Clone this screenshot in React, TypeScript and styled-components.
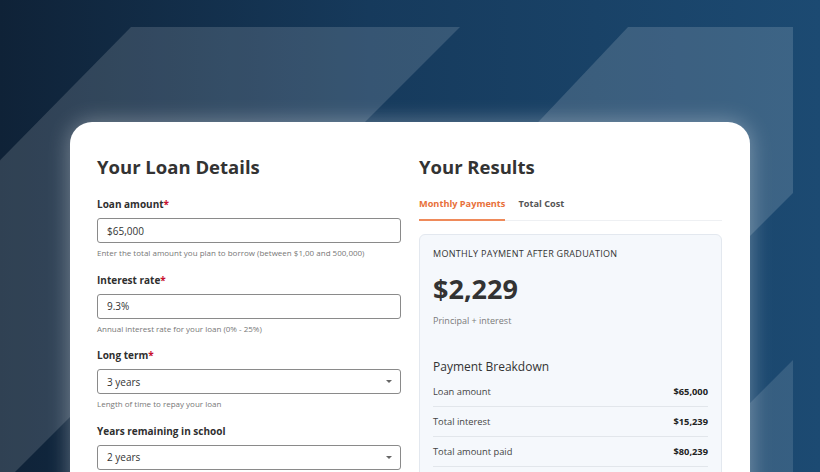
import React from 'react';
import styled, { createGlobalStyle } from 'styled-components';

const GlobalStyle = createGlobalStyle`
    html, body {
        margin: 0;
        padding: 0;
        background: #10243a;
    }
    * {
        box-sizing: border-box;
    }
`;

const Stage = styled.div`
    position: relative;
    width: 820px;
    height: 472px;
    overflow: hidden;
    background: linear-gradient(90deg, #0f2237 0%, #163a5c 45%, #1c4a72 100%);
    font-family: 'Open Sans', 'Noto Sans', sans-serif;
    color: #333;
`;

const Backdrop = styled.svg`
    position: absolute;
    inset: 0;
    width: 820px;
    height: 472px;
`;

const Card = styled.main`
    position: relative;
    margin: 0 0 0 70px;
    top: 122px;
    width: 680px;
    height: 400px;
    background: #fff;
    border-radius: 22px 22px 0 0;
    box-shadow: 0 0 22px rgba(255, 255, 255, 0.35);
    padding: 31px 28px 0 27px;
    display: grid;
    grid-template-columns: 304px 303px;
    column-gap: 18px;
    align-items: start;
`;

const Column = styled.section`
    display: flex;
    flex-direction: column;
`;

const Heading = styled.h2`
    margin: 0 0 16px;
    font-size: 18.5px;
    line-height: 28px;
    font-weight: 700;
    color: #333;
`;

const Field = styled.div`
    display: flex;
    flex-direction: column;
    margin-bottom: 13.5px;
`;

const Label = styled.label`
    font-size: 10px;
    line-height: 14px;
    font-weight: 700;
    color: #2f2f2f;
    margin-bottom: 7px;
`;

const Required = styled.span`
    color: #c8102e;
`;

const InputBox = styled.div`
    position: relative;
    display: flex;
    align-items: center;
    height: 25px;
    border: 1px solid #8a8a8a;
    border-radius: 3px;
    padding: 0 9px;
    font-size: 10px;
    color: #333;
    background: #fff;
`;

const Caret = styled.span`
    margin-left: auto;
    margin-right: -1px;
    width: 0;
    height: 0;
    border-left: 3px solid transparent;
    border-right: 3px solid transparent;
    border-top: 3px solid #666;
`;

const Help = styled.p`
    margin: 4px 0 0;
    font-size: 8px;
    line-height: 12px;
    color: #777;
`;

const Tabs = styled.div`
    display: flex;
    gap: 13px;
    border-bottom: 1px solid #eef0f3;
    margin-bottom: 13px;
`;

const Tab = styled.div<{ active?: boolean }>`
    font-size: 9.2px;
    line-height: 14px;
    font-weight: 700;
    padding-bottom: 8px;
    margin-bottom: -1px;
    color: ${(props) => (props.active ? '#e8703a' : '#555')};
    border-bottom: 2px solid ${(props) => (props.active ? '#ef8a5a' : 'transparent')};
`;

const ResultBox = styled.div`
    background: #f5f8fc;
    border: 1px solid #e3e8ef;
    border-radius: 6px;
    padding: 13px 13px 0;
    height: 260px;
`;

const Overline = styled.div`
    font-size: 9px;
    line-height: 12px;
    letter-spacing: 0.3px;
    text-transform: uppercase;
    color: #333;
`;

const BigNumber = styled.div`
    margin-top: 12px;
    font-size: 27px;
    line-height: 34px;
    font-weight: 700;
    color: #333;
`;

const Caption = styled.div`
    margin-top: 9px;
    font-size: 9px;
    line-height: 12px;
    color: #7a7a7a;
`;

const SubHeading = styled.h3`
    margin: 32px 0 2px;
    font-size: 12px;
    line-height: 16px;
    font-weight: 500;
    color: #333;
`;

const Row = styled.div`
    display: flex;
    justify-content: space-between;
    align-items: center;
    height: 30px;
    border-bottom: 1px solid #e2e6eb;
    font-size: 9.3px;
    color: #444;
`;

const Value = styled.span`
    font-weight: 700;
    color: #222;
`;

const fields = [
    { label: 'Loan amount', required: true, value: '$65,000', help: 'Enter the total amount you plan to borrow (between $1,00 and 500,000)' },
    { label: 'Interest rate', required: true, value: '9.3%', help: 'Annual interest rate for your loan (0% - 25%)' },
    { label: 'Long term', required: true, value: '3 years', select: true, help: 'Length of time to repay your loan' },
    { label: 'Years remaining in school', value: '2 years', select: true },
];

const breakdown = [
    ['Loan amount', '$65,000'],
    ['Total interest', '$15,239'],
    ['Total amount paid', '$80,239'],
];

const App = (): JSX.Element => {
    return (
        <>
            <GlobalStyle />
            <Stage>
                <Backdrop viewBox="0 0 820 472">
                    <polygon points="131,27 460,27 -100,587 -420,587" fill="#fff" fillOpacity="0.14" />
                    <polygon points="628,27 793,27 793,193 400,586 100,586" fill="#fff" fillOpacity="0.15" />
                    <polygon points="793,360 793,472 681,472" fill="#fff" fillOpacity="0.12" />
                </Backdrop>
                <Card>
                    <Column>
                        <Heading>Your Loan Details</Heading>
                        {fields.map((field) => (
                            <Field key={field.label}>
                                <Label>
                                    {field.label}
                                    {field.required ? <Required>*</Required> : null}
                                </Label>
                                <InputBox>
                                    {field.value}
                                    {field.select ? <Caret /> : null}
                                </InputBox>
                                {field.help ? <Help>{field.help}</Help> : null}
                            </Field>
                        ))}
                    </Column>
                    <Column>
                        <Heading>Your Results</Heading>
                        <Tabs>
                            <Tab active>Monthly Payments</Tab>
                            <Tab>Total Cost</Tab>
                        </Tabs>
                        <ResultBox>
                            <Overline>Monthly payment after graduation</Overline>
                            <BigNumber>$2,229</BigNumber>
                            <Caption>Principal + interest</Caption>
                            <SubHeading>Payment Breakdown</SubHeading>
                            {breakdown.map(([name, amount]) => (
                                <Row key={name}>
                                    <span>{name}</span>
                                    <Value>{amount}</Value>
                                </Row>
                            ))}
                        </ResultBox>
                    </Column>
                </Card>
            </Stage>
        </>
    );
};

export default App;
